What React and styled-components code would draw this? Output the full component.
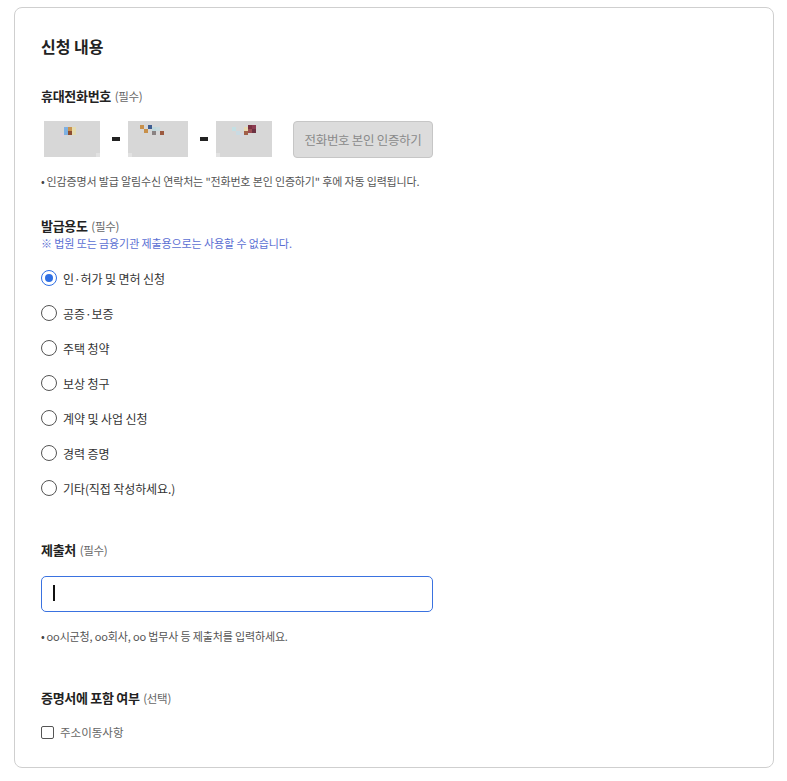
import React from 'react'
import styled, { createGlobalStyle } from 'styled-components'

const GlobalStyle = createGlobalStyle`
  body {
    margin: 0;
    padding: 7px 13px 13px 14px;
    background: #fff;
    font-family: "Noto Sans CJK KR", "Noto Sans", sans-serif;
    color: #222;
  }
`

const Card = styled.section`
  box-sizing: border-box;
  width: 760px;
  height: 761px;
  border: 1px solid #cfcfcf;
  border-radius: 8px;
  padding: 26px 26px 0 26px;
`

const Title = styled.h2`
  margin: 0;
  font-size: 16px;
  line-height: 24px;
  font-weight: 700;
  color: #222;
`

const Label = styled.div`
  margin-top: ${p => p.top}px;
  font-size: 13px;
  line-height: 20px;
  font-weight: 700;
  color: #222;
  letter-spacing: -0.3px;
`

const Sub = styled.span`
  font-size: 11.5px;
  font-weight: 400;
  color: #666;
  margin-left: 1px;
`

const PhoneRow = styled.div`
  margin-top: 15px;
  display: flex;
  align-items: flex-start;
  padding-left: 3px;
`

const Masked = styled.div`
  width: ${p => p.w}px;
  height: 36px;
  background: #d7d7d7;
  svg { display: block; }
`

const Dash = styled.div`
  width: 8px;
  height: 4px;
  background: #222;
  margin: 16px 8px 0 12px;
`

const VerifyButton = styled.button`
  box-sizing: border-box;
  margin-left: 21px;
  width: 140px;
  height: 37px;
  border: 1px solid #c6c6c6;
  border-radius: 4px;
  background: #dcdcdc;
  color: #8a8a8a;
  font-family: inherit;
  font-size: 12.5px;
  letter-spacing: -0.3px;
  padding: 0;
`

const Note = styled.p`
  margin: ${p => p.top}px 0 0;
  font-size: 11px;
  line-height: 18px;
  color: #555;
  letter-spacing: -0.15px;
  &::before {
    content: '•';
    margin-right: 2px;
    color: #444;
  }
`

const Warn = styled.p`
  margin: 0;
  font-size: 11px;
  line-height: 14px;
  color: #5b6fd3;
  letter-spacing: -0.1px;
`

const RadioList = styled.div`
  margin-top: 18px;
  display: flex;
  flex-direction: column;
  gap: 15px;
`

const RadioRow = styled.label`
  display: flex;
  align-items: center;
  height: 20px;
  font-size: 12px;
  color: #333;
  letter-spacing: -0.1px;
`

const RadioDot = styled.span`
  box-sizing: border-box;
  width: 16px;
  height: 16px;
  border-radius: 50%;
  border: 1.5px solid ${p => (p.on ? '#2f6fe4' : '#555')};
  margin-right: 6px;
  display: flex;
  align-items: center;
  justify-content: center;
  &::after {
    content: '';
    width: 8px;
    height: 8px;
    border-radius: 50%;
    background: ${p => (p.on ? '#2f6fe4' : 'transparent')};
  }
`

const Input = styled.div`
  box-sizing: border-box;
  margin-top: 16px;
  width: 392px;
  height: 36px;
  border: 1.5px solid #3a72e0;
  border-radius: 5px;
  padding: 8px 11px;
`

const Caret = styled.span`
  display: block;
  width: 1.5px;
  height: 16px;
  background: #111;
`

const CheckRow = styled.label`
  margin-top: 14px;
  display: flex;
  align-items: center;
  height: 20px;
  font-size: 11.5px;
  color: #666;
`

const CheckBox = styled.span`
  box-sizing: border-box;
  width: 13px;
  height: 13px;
  border: 1.5px solid #555;
  border-radius: 2px;
  margin-right: 6px;
`

const mosaic = [
  {
    w: 56,
    cells: [
      [16, 12, '#ddd3de'], [20, 6, '#7eb0e2'], [20, 10, '#7eb0e2'], [24, 6, '#c99350'],
      [28, 6, '#e6dcae'], [24, 10, '#8c4c32'], [28, 10, '#e4dcb2'], [52, 32, '#e2e2e2'],
    ],
  },
  {
    w: 60,
    cells: [
      [12, 4, '#c8904a'], [16, 8, '#c8904a'], [20, 4, '#3e5e92'], [24, 6, '#bfd8dc'],
      [28, 6, '#c7dade'], [24, 10, '#8a8282'], [32, 10, '#9c5a40'], [0, 32, '#e2e2e2'],
    ],
  },
  {
    w: 56,
    cells: [
      [16, 6, '#c3e0e4'], [20, 10, '#cadbe3'], [24, 12, '#d4d8e2'], [28, 6, '#e8dab2'],
      [32, 4, '#7b3242'], [36, 4, '#8c3c52'], [32, 8, '#9c4c52'], [36, 8, '#6c3242'],
      [28, 10, '#a26048'], [0, 32, '#e2e2e2'],
    ],
  },
]

const MaskedBox = ({ w, cells }) => (
  <Masked w={w}>
    <svg width={w} height="36" viewBox={`0 0 ${w} 36`}>
      {cells.map(([x, y, c], i) => (
        <rect key={i} x={x} y={y} width="4" height="4" fill={c} />
      ))}
    </svg>
  </Masked>
)

const purposes = [
  '인·허가 및 면허 신청',
  '공증·보증',
  '주택 청약',
  '보상 청구',
  '계약 및 사업 신청',
  '경력 증명',
  '기타(직접 작성하세요.)',
]

export default function App() {
  return (
    <>
      <GlobalStyle />
      <Card>
        <Title>신청 내용</Title>

        <Label top={28}>휴대전화번호 <Sub>(필수)</Sub></Label>
        <PhoneRow>
          <MaskedBox {...mosaic[0]} />
          <Dash />
          <MaskedBox {...mosaic[1]} />
          <Dash />
          <MaskedBox {...mosaic[2]} />
          <VerifyButton>전화번호 본인 인증하기</VerifyButton>
        </PhoneRow>
        <Note top={14}>인감증명서 발급 알림수신 연락처는 "전화번호 본인 인증하기" 후에 자동 입력됩니다.</Note>

        <Label top={26}>발급용도 <Sub>(필수)</Sub></Label>
        <Warn>※ 법원 또는 금융기관 제출용으로는 사용할 수 없습니다.</Warn>
        <RadioList>
          {purposes.map((p, i) => (
            <RadioRow key={p}>
              <RadioDot on={i === 0} />
              {p}
            </RadioRow>
          ))}
        </RadioList>

        <Label top={42}>제출처 <Sub>(필수)</Sub></Label>
        <Input>
          <Caret />
        </Input>
        <Note top={15}>oo시군청, oo회사, oo 법무사 등 제출처를 입력하세요.</Note>

        <Label top={43}>증명서에 포함 여부 <Sub>(선택)</Sub></Label>
        <CheckRow>
          <CheckBox />
          주소이동사항
        </CheckRow>
      </Card>
    </>
  )
}
